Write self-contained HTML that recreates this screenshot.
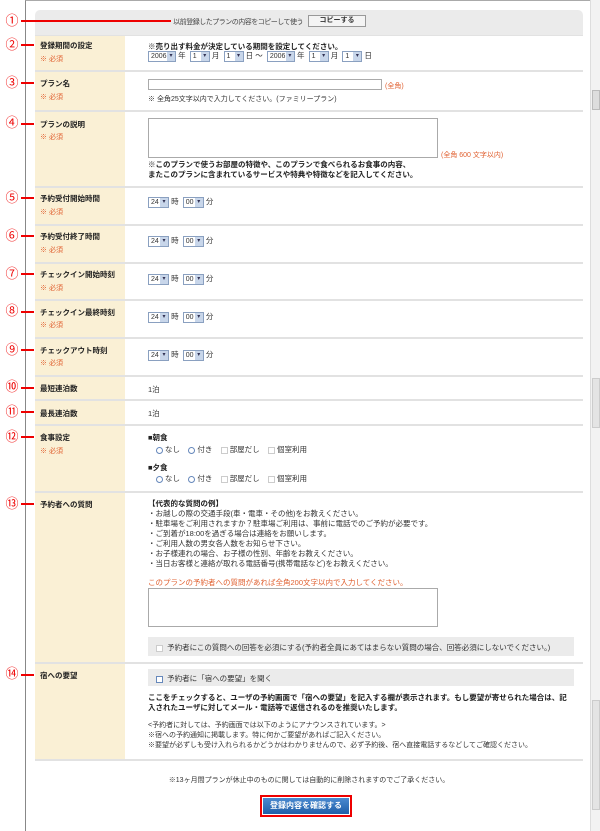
<!DOCTYPE html>
<html><head><meta charset="utf-8"><style>
*{margin:0;padding:0;box-sizing:border-box}
body{width:600px;height:831px;overflow:hidden;background:#fff;position:relative;font-family:"Liberation Sans","Noto Sans CJK JP",sans-serif;font-size:7.5px;color:#333}
.a{position:absolute}
.frame{left:25px;top:0;width:565px;height:831px;border-left:1px solid #888;border-top:1px solid #aaa}
.sb{left:590px;top:0;width:10px;height:831px;background:#f2f2f2;border-left:1px solid #ddd}
.lab{left:35px;width:90px;background:#faf0d5}
.sep{left:35px;width:548px;height:2px;background:#e2e2e2}
.lt{left:40px;font-weight:bold;color:#222;font-size:7.5px}
.req{left:40px;color:#e06030;font-size:7px}
.num{left:3px;width:18px;color:#e00;font-size:13px;text-align:center;line-height:13px}
.ln{left:21px;width:13px;height:2px;background:#e00}
.sel{display:inline-block;height:11px;border:1px solid #8aa0c0;background:#fff;font-size:7px;line-height:9px;padding-left:2px;position:relative;vertical-align:middle;text-align:left}
.sel i{position:absolute;right:0;top:0;width:8px;height:9px;background:#c8d6ea;font-style:normal;font-size:6px;line-height:9px;text-align:center;color:#335}
.v{left:148px}
.ta{border:1px solid #aaa;background:#fff}
.rb{display:inline-block;width:7px;height:7px;border:1px solid #6688bb;border-radius:50%;vertical-align:middle;margin-right:2px}
.cb{display:inline-block;width:7px;height:7px;border:1px solid #ccc;vertical-align:middle;margin-right:2px}
</style></head><body>
<div class="a frame"></div>
<div class="a sb"><div class="a" style="left:1px;top:90px;width:8px;height:20px;background:#ddd;border:1px solid #bbb"></div><div class="a" style="left:1px;top:378px;width:8px;height:50px;background:#e4e4e4;border:1px solid #ccc"></div><div class="a" style="left:1px;top:700px;width:8px;height:110px;background:#e4e4e4;border:1px solid #ccc"></div></div>
<div class="a" style="left:35px;top:10px;width:548px;height:25px;background:#ebebeb;border-radius:5px 5px 0 0"></div>
<div class="a" style="right:297px;top:17px;color:#444;font-size:7px;white-space:nowrap;letter-spacing:-0.5px">以前登録したプランの内容をコピーして使う</div>
<div class="a" style="left:308px;top:15px;width:58px;height:12px;border:1px solid #999;background:#f4f4f4;font-size:7px;font-weight:bold;text-align:center;line-height:10px">コピーする</div>
<div class="a num" style="top:14px">①</div><div class="a" style="left:21px;top:20px;width:150px;height:2px;background:#e00"></div>

<div class="a lab" style="top:36px;height:723px"></div>
<div class="a sep" style="top:35px;height:1px"></div>
<div class="a sep" style="top:70px"></div><div class="a sep" style="top:110px"></div><div class="a sep" style="top:186px"></div><div class="a sep" style="top:224px"></div><div class="a sep" style="top:262px"></div><div class="a sep" style="top:299px"></div><div class="a sep" style="top:337px"></div><div class="a sep" style="top:375px"></div><div class="a sep" style="top:399px"></div><div class="a sep" style="top:424px"></div><div class="a sep" style="top:491px"></div><div class="a sep" style="top:662px"></div><div class="a sep" style="top:759px"></div>

<div class="a num" style="top:38px">②</div><div class="a ln" style="top:44px"></div><div class="a lt" style="top:40px">登録期間の設定</div><div class="a req" style="top:54px">※ 必須</div>
<div class="a num" style="top:76px">③</div><div class="a ln" style="top:82px"></div><div class="a lt" style="top:78px">プラン名</div><div class="a req" style="top:92px">※ 必須</div>
<div class="a num" style="top:116px">④</div><div class="a ln" style="top:123px"></div><div class="a lt" style="top:119px">プランの説明</div><div class="a req" style="top:132px">※ 必須</div>
<div class="a num" style="top:191px">⑤</div><div class="a ln" style="top:197px"></div><div class="a lt" style="top:193px">予約受付開始時間</div><div class="a req" style="top:207px">※ 必須</div>
<div class="a num" style="top:229px">⑥</div><div class="a ln" style="top:235px"></div><div class="a lt" style="top:231px">予約受付終了時間</div><div class="a req" style="top:245px">※ 必須</div>
<div class="a num" style="top:267px">⑦</div><div class="a ln" style="top:273px"></div><div class="a lt" style="top:269px">チェックイン開始時刻</div><div class="a req" style="top:283px">※ 必須</div>
<div class="a num" style="top:304px">⑧</div><div class="a ln" style="top:311px"></div><div class="a lt" style="top:307px">チェックイン最終時刻</div><div class="a req" style="top:320px">※ 必須</div>
<div class="a num" style="top:343px">⑨</div><div class="a ln" style="top:349px"></div><div class="a lt" style="top:345px">チェックアウト時刻</div><div class="a req" style="top:358px">※ 必須</div>
<div class="a num" style="top:380px">⑩</div><div class="a ln" style="top:387px"></div><div class="a lt" style="top:383px">最短連泊数</div>
<div class="a num" style="top:405px">⑪</div><div class="a ln" style="top:411px"></div><div class="a lt" style="top:408px">最長連泊数</div>
<div class="a num" style="top:430px">⑫</div><div class="a ln" style="top:436px"></div><div class="a lt" style="top:432px">食事設定</div><div class="a req" style="top:446px">※ 必須</div>
<div class="a num" style="top:497px">⑬</div><div class="a ln" style="top:503px"></div><div class="a lt" style="top:499px">予約者への質問</div>
<div class="a num" style="top:667px">⑭</div><div class="a ln" style="top:674px"></div><div class="a lt" style="top:670px">宿への要望</div>

<div class="a v" style="top:41px;font-weight:bold;color:#222">※売り出す料金が決定している期間を設定してください。</div>
<div class="a v" style="top:50px;white-space:nowrap"><span class="sel" style="width:28px">2006<i>▾</i></span> 年 &nbsp;<span class="sel" style="width:20px">1<i>▾</i></span> 月 &nbsp;<span class="sel" style="width:20px">1<i>▾</i></span> 日 〜 &nbsp;<span class="sel" style="width:28px">2006<i>▾</i></span> 年 &nbsp;<span class="sel" style="width:20px">1<i>▾</i></span> 月 &nbsp;<span class="sel" style="width:20px">1<i>▾</i></span> 日</div>
<div class="a ta" style="left:148px;top:79px;width:234px;height:11px"></div>
<div class="a" style="left:385px;top:81px;color:#e06030;font-size:7px">(全角)</div>
<div class="a v" style="top:94px;font-size:7px">※ 全角25文字以内で入力してください。(ファミリープラン)</div>
<div class="a ta" style="left:148px;top:118px;width:290px;height:40px"></div>
<div class="a" style="left:441px;top:150px;color:#e06030;font-size:7px">(全角 600 文字以内)</div>
<div class="a v" style="top:160px;font-weight:bold;color:#222;line-height:10px">※このプランで使うお部屋の特徴や、このプランで食べられるお食事の内容、<br>またこのプランに含まれているサービスや特典や特徴などを記入してください。</div>
<div class="a v" style="top:196px"><span class="sel" style="width:21px">24<i>▾</i></span> 時 &nbsp;<span class="sel" style="width:21px">00<i>▾</i></span> 分</div>
<div class="a v" style="top:235px"><span class="sel" style="width:21px">24<i>▾</i></span> 時 &nbsp;<span class="sel" style="width:21px">00<i>▾</i></span> 分</div>
<div class="a v" style="top:273px"><span class="sel" style="width:21px">24<i>▾</i></span> 時 &nbsp;<span class="sel" style="width:21px">00<i>▾</i></span> 分</div>
<div class="a v" style="top:311px"><span class="sel" style="width:21px">24<i>▾</i></span> 時 &nbsp;<span class="sel" style="width:21px">00<i>▾</i></span> 分</div>
<div class="a v" style="top:349px"><span class="sel" style="width:21px">24<i>▾</i></span> 時 &nbsp;<span class="sel" style="width:21px">00<i>▾</i></span> 分</div>
<div class="a v" style="top:384px">1泊</div>
<div class="a v" style="top:408px">1泊</div>
<div class="a v" style="top:432px;font-weight:bold;color:#222">■朝食</div>
<div class="a" style="left:156px;top:444px;white-space:nowrap"><span class="rb"></span>なし &nbsp; &nbsp;<span class="rb"></span>付き &nbsp; &nbsp;<span class="cb"></span>部屋だし &nbsp; &nbsp;<span class="cb"></span>個室利用</div>
<div class="a v" style="top:462px;font-weight:bold;color:#222">■夕食</div>
<div class="a" style="left:156px;top:473px;white-space:nowrap"><span class="rb"></span>なし &nbsp; &nbsp;<span class="rb"></span>付き &nbsp; &nbsp;<span class="cb"></span>部屋だし &nbsp; &nbsp;<span class="cb"></span>個室利用</div>
<div class="a v" style="top:499px;line-height:10px"><b style="color:#222">【代表的な質問の例】</b><br>・お越しの際の交通手段(車・電車・その他)をお教えください。<br>・駐車場をご利用されますか？駐車場ご利用は、事前に電話でのご予約が必要です。<br>・ご到着が18:00を過ぎる場合は連絡をお願いします。<br>・ご利用人数の男女各人数をお知らせ下さい。<br>・お子様連れの場合、お子様の性別、年齢をお教えください。<br>・当日お客様と連絡が取れる電話番号(携帯電話など)をお教えください。</div>
<div class="a v" style="top:577px;color:#e06030">このプランの予約者への質問があれば全角200文字以内で入力してください。</div>
<div class="a ta" style="left:148px;top:588px;width:290px;height:39px"></div>
<div class="a" style="left:148px;top:637px;width:426px;height:19px;background:#ebebeb"></div>
<div class="a" style="left:156px;top:642px"><span class="cb" style="background:#fff"></span> 予約者にこの質問への回答を必須にする(予約者全員にあてはまらない質問の場合、回答必須にしないでください。)</div>
<div class="a" style="left:148px;top:669px;width:426px;height:17px;background:#ebebeb"></div>
<div class="a" style="left:156px;top:673px"><span class="cb" style="background:#fff;border-color:#6688bb"></span> 予約者に「宿への要望」を聞く</div>
<div class="a v" style="top:693px;width:420px;font-weight:bold;color:#222;line-height:10px">ここをチェックすると、ユーザの予約画面で「宿への要望」を記入する欄が表示されます。もし要望が寄せられた場合は、記入されたユーザに対してメール・電話等で返信されるのを推奨いたします。</div>
<div class="a v" style="top:721px;line-height:10px;font-size:7px">&lt;予約者に対しては、予約画面では以下のようにアナウンスされています。&gt;<br>※宿への予約通知に掲載します。特に何かご要望があればご記入ください。<br>※要望が必ずしも受け入れられるかどうかはわかりませんので、必ず予約後、宿へ直接電話するなどしてご確認ください。</div>
<div class="a" style="left:35px;top:775px;width:548px;text-align:center;font-size:7px">※13ヶ月間プランが休止中のものに関しては自動的に削除されますのでご了承ください。</div>
<div class="a" style="left:260px;top:795px;width:92px;height:22px;border:2px solid #e00;padding:1px"><div style="width:100%;height:100%;background:linear-gradient(#4a8ad0,#1f5ea8);color:#fff;font-weight:bold;font-size:8px;text-align:center;line-height:16px">登録内容を確認する</div></div>
</body></html>
